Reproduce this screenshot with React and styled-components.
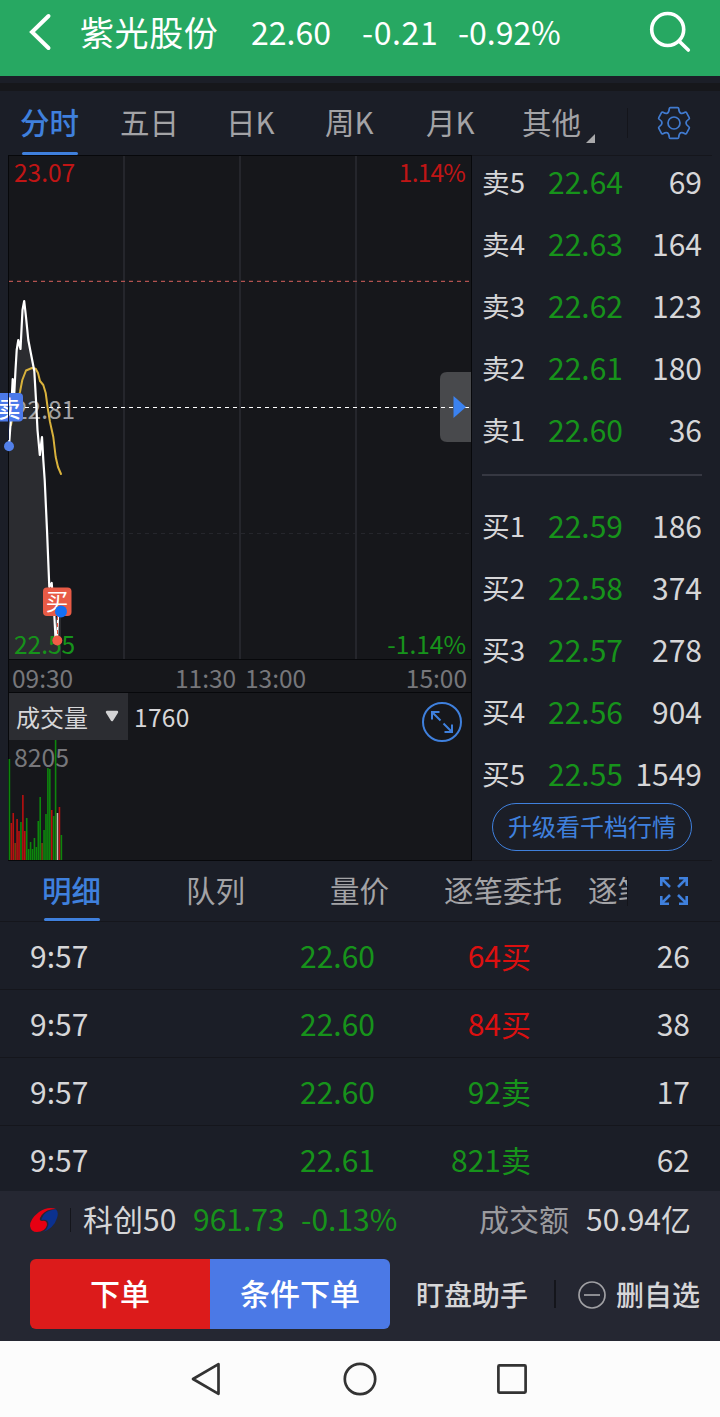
import React, { useState } from "react";
import styled, { createGlobalStyle } from "styled-components";

const GlobalStyle = createGlobalStyle`
  * {
    box-sizing: border-box;
  }

  body {
    margin: 0;
    background-color: #1b1e27;
    font-family: "Noto Sans CJK SC", sans-serif;
  }
`;

const Page = styled.div`
  width: 720px;
  height: 1417px;
  display: flex;
  flex-direction: column;
  overflow: hidden;
  background-color: #1b1e27;
  color: #d6d6d8;
  white-space: nowrap;
`;

const Header = styled.header`
  height: 76px;
  padding: 0 28px 12px;
  display: grid;
  grid-template-columns: 52px 171px 111px 96px 190px 44px;
  align-items: center;
  background-color: #27a862;
  color: #ffffff;
`;

const StockName = styled.div`
  padding-bottom: 2px;
  font-size: 34px;
  letter-spacing: 0.6px;
`;

const HeaderNumber = styled.div`
  padding-bottom: 2px;
  font-size: 32px;
  letter-spacing: ${(props) => props.$spacing || 0}px;
`;

const Strip = styled.div`
  height: 15px;
  border-top: 7px solid #1b1e27;
  background-color: #16171b;
`;

const PeriodTabs = styled.nav`
  height: 64px;
  padding-left: 20px;
  display: grid;
  grid-template-columns: 100px 106px 99px 101px 96px 105px 1px 92px;
  align-items: center;
`;

const Tab = styled.div`
  height: 64px;
  display: flex;
  align-items: center;
  font-size: 29.5px;
  font-weight: ${(props) => (props.$selected ? 500 : 400)};
  color: ${(props) => (props.$selected ? "#3f80dd" : "#a3a3a6")};
  cursor: pointer;

  span {
    height: 64px;
    line-height: 61px;
    display: flex;
    flex-direction: column;
  }

  span::after {
    content: "";
    width: 56px;
    height: 3px;
    margin-left: 2px;
    border-radius: 2px;
    background-color: ${(props) =>
      props.$selected ? "#3f80dd" : "transparent"};
  }
`;

const Corner = styled.i`
  margin: 30px 0 0 5px;
  border-left: 9px solid transparent;
  border-bottom: 9px solid #a9a9ab;
`;

const Separator = styled.div`
  width: ${(props) => props.$width || 1}px;
  height: ${(props) => props.$height}px;
  background-color: #14151b;
`;

const IconCell = styled.div`
  display: flex;
  justify-content: center;
`;

const Market = styled.main`
  height: 706px;
  padding-left: 8px;
  display: flex;
`;

const Charts = styled.div`
  width: 464px;
  display: flex;
  flex-direction: column;

  svg {
    display: block;
  }
`;

const TimeAxis = styled.div`
  height: 33px;
  padding: 0 4px 3px 3px;
  display: grid;
  grid-template-columns: 163px 70px 1fr auto;
  align-items: center;
  border: 1px solid #07080b;
  border-width: 1px 1px 0;
  background-color: #16171b;
  color: #77777b;
  font-size: 24.5px;
`;

const VolumeBar = styled.div`
  height: 48px;
  display: flex;
  align-items: stretch;
  border: 1px solid #07080b;
  border-bottom: none;
  background-color: #16171b;
`;

const VolumeSelect = styled.div`
  width: 119px;
  padding: 0 9px 1px 7px;
  display: flex;
  align-items: center;
  justify-content: space-between;
  background-color: #2c2d32;
  font-size: 24px;
`;

const VolumeValue = styled.div`
  flex: 1;
  padding-left: 6px;
  line-height: 47px;
  font-size: 24.5px;
  letter-spacing: 0.3px;
`;

/* hangs a little over the volume chart below the bar */
const ExpandButton = styled.div`
  position: relative;
  z-index: 1;
  height: 40px;
  margin: 9px 9px 0 0;
`;

const OrderBook = styled.aside`
  flex: 1;
  margin-right: 8px;
  padding: 0 10px 0 11px;
  border-top: 1px solid #15161c;
  border-bottom: 1px solid #15161c;
`;

const Level = styled.div`
  height: 62px;
  padding-bottom: 4px;
  display: grid;
  grid-template-columns: 65px 75px 1fr;
  align-items: center;
  font-size: 30px;

  &:first-child {
    height: 58px;
    padding-bottom: 8px;
  }
`;

const Side = styled.span`
  margin-left: -1px;
  padding-bottom: 1px;
  font-size: 27.7px;
`;

const Quote = styled.span`
  color: #17931b;
`;

const Amount = styled.span`
  text-align: right;
`;

const BookDivider = styled.hr`
  height: 2px;
  margin: 12px 0 20px -1px;
  border: none;
  background-color: #363842;
`;

const UpgradeButton = styled.div`
  width: 200px;
  height: 48px;
  margin: -3px 0 0 9px;
  border: 1px solid #3f80dd;
  border-radius: 24px;
  color: #3f80dd;
  font-size: 24px;
  line-height: 44px;
  text-align: center;
`;

const DetailTabs = styled.nav`
  height: 61px;
  padding-left: 42px;
  display: grid;
  grid-template-columns: 144px 144px 114px 144px 39px 1px 92px;
  align-items: center;
  border-bottom: 1px solid #15161c;

  ${Tab} {
    height: 60px;
    overflow: hidden;
  }

  ${Tab} span {
    height: 60px;
    line-height: 57px;
  }
`;

const Trades = styled.div`
  height: 269px;
  overflow: hidden;
`;

const Trade = styled.div`
  height: 68px;
  padding: 0 30px 2px;
  display: grid;
  grid-template-columns: 270px 75px 156px 1fr;
  align-items: center;
  border-bottom: 1px solid #15161c;
  font-size: 30px;
`;

const Deal = styled.span`
  text-align: right;
  color: ${(props) => (props.$buy ? "#dc1010" : "#17931b")};
`;

const Footer = styled.footer`
  height: 150px;
  padding: 0 30px;
  background-color: #252732;
`;

const IndexRow = styled.div`
  height: 57px;
  display: grid;
  grid-template-columns: 40px 13px 110px 108px 178px 107px auto;
  align-items: center;
  font-size: 30px;

  span {
    padding-bottom: 4px;
  }
`;

const Green = styled.span`
  color: #17931b;
`;

const Muted = styled.span`
  color: #9b9b9f;
`;

const ActionRow = styled.div`
  height: 93px;
  margin-right: -30px;
  padding-bottom: 1px;
  display: flex;
  align-items: center;
  font-size: 28px;
  font-weight: 500;
`;

const OrderButton = styled.div`
  width: 180px;
  height: 70px;
  margin-top: -1px;
  border-radius: ${(props) => props.$radius};
  background-color: ${(props) => props.$color};
  color: #ffffff;
  font-size: 30px;
  font-weight: 500;
  line-height: 67px;
  text-align: center;
`;

const Assistant = styled.div`
  width: 164px;
  padding: 0 0 1px 26px;
`;

const Remove = styled.div`
  padding: 0 0 1px 22px;
  display: flex;
  align-items: center;
  gap: 10px;

  svg {
    margin-top: 3px;
  }
`;

const SystemBar = styled.div`
  height: 76px;
  background-color: #fcfcfc;
  display: grid;
  grid-template-columns: 52px 52px 52px;
  gap: 100px;
  justify-content: center;
  align-items: center;
  justify-items: center;
`;

const PRICE_LINE =
  "9,446 11,417 12,393 12.7,379 14.3,393 15.5,370 16.7,350 18.3,340 20.5,349 22.5,310 24.2,301 26,317 28.3,340 31,354 34.3,371 36,400 37.5,430 39.8,455 42,437 43.3,460 44.7,480 47,530 49.3,587 51.7,583 53,600 54.3,615 55.6,640 57,640 58,617 61,611";

const AVERAGE_LINE =
  "11,425 14,410 20,392 22.3,380 26,370.5 32,368 35.7,368.7 38,373 40,381 43.3,385 45.7,393 47.7,408 50,422 53.3,437 55.7,457 58,467 61,474";

// bar height and kind: r = up, g = down, w = flat, m = mixed
const VOLUMES = [
  [101, "g"], [37, "r"], [47, "r"], [17, "m"], [41, "r"], [29, "r"],
  [38, "g"], [65, "r"], [29, "r"], [42, "g"], [11, "g"], [18, "g"],
  [11, "g"], [22, "g"], [13, "g"], [39, "g"], [63, "g"], [17, "m"],
  [30, "g"], [46, "g"], [92, "g"], [91, "g"], [50, "r"], [44, "g"],
  [120, "g"], [47, "w"], [53, "r"], [25, "g"],
];

const VOLUME_COLORS = { r: "#b91010", g: "#0d860d", w: "#c2bcae", m: "#73410f" };

const SELLS = [
  ["卖5", "22.64", 69],
  ["卖4", "22.63", 164],
  ["卖3", "22.62", 123],
  ["卖2", "22.61", 180],
  ["卖1", "22.60", 36],
];

const BUYS = [
  ["买1", "22.59", 186],
  ["买2", "22.58", 374],
  ["买3", "22.57", 278],
  ["买4", "22.56", 904],
  ["买5", "22.55", 1549],
];

const TRADES = [
  ["9:57", "22.60", "64买", 26],
  ["9:57", "22.60", "84买", 38],
  ["9:57", "22.60", "92卖", 17],
  ["9:57", "22.61", "821卖", 62],
];

function PriceChart() {
  return (
    <svg
      width="472"
      height="504"
      viewBox="0 155 472 504"
      style={{ marginLeft: -8 }}
    >
      <rect x="8.5" y="155.5" width="463" height="505" fill="#16171b" stroke="#07080b" />
      <g stroke="#25262c" strokeWidth="2">
        <path d="M124 156V659M240 156V659M356 156V659" />
      </g>
      <path d="M9 533.5H471" stroke="#25262c" strokeDasharray="4 4" />
      <polygon points={`9,659 ${PRICE_LINE} 61,659`} fill="#2b2c30" />
      <path d="M9 281.3H471" stroke="#b2524f" strokeWidth="1.3" strokeDasharray="4 4" />
      <g fontSize="24.5">
        <text x="14" y="181.6" fill="#c01515">23.07</text>
        <text x="465" y="181.6" fill="#c01515" textAnchor="end" letterSpacing="-0.8">1.14%</text>
        <text x="14" y="418.5" fill="#a0a0a3">22.81</text>
        <text x="14" y="653.6" fill="#17931b">22.55</text>
        <text x="466" y="653.6" fill="#17931b" textAnchor="end">-1.14%</text>
      </g>
      <path d="M447 372H471V442H447Q440 442 440 435V379Q440 372 447 372Z" fill="#48494c" />
      <path d="M9 407.5H471" stroke="#ffffff" strokeDasharray="4 4" />
      <path d="M453.5 396L466 407L453.5 418Z" fill="#3b82f0" />
      <polyline points={AVERAGE_LINE} fill="none" stroke="#d9b23c" strokeWidth="2" strokeLinejoin="round" strokeLinecap="round" />
      <polyline points={PRICE_LINE} fill="none" stroke="#ffffff" strokeWidth="2.2" strokeLinejoin="round" />
      <rect x="-6" y="393" width="29" height="28.5" rx="4" fill="#4b79ea" />
      <text x="-2" y="416.5" fontSize="22.5" fontWeight="500" fill="#ffffff">卖</text>
      <path d="M8.5 393V440" stroke="#101a3a" />
      <circle cx="9" cy="446.3" r="5" fill="#5280ea" />
      <path d="M57.5 616V636" stroke="#e8503c" strokeDasharray="4 3" />
      <rect x="43" y="587.5" width="28.5" height="28.5" rx="4" fill="#e85b46" />
      <text x="45.7" y="609.5" fontSize="22.5" fill="#ffffff">买</text>
      <circle cx="61" cy="611.5" r="6" fill="#1470f4" />
      <circle cx="57.3" cy="640.5" r="5" fill="#f05c46" />
    </svg>
  );
}

function VolumeChart() {
  return (
    <svg
      width="464"
      height="121"
      viewBox="8 740 464 121"
    >
      <rect x="8" y="740" width="464" height="121" fill="#16171b" />
      <path d="M8.5 740V860.5H471.5V740" fill="none" stroke="#07080b" />
      <text x="14" y="766.6" fontSize="24.8" fill="#77777b">8205</text>
      {VOLUMES.map(([size, kind], i) => (
        <rect
          key={i}
          x={8.6 + i * 1.925}
          y={860 - size}
          width="1.6"
          height={size}
          fill={VOLUME_COLORS[kind]}
        />
      ))}
    </svg>
  );
}

function GearIcon() {
  return (
    <svg width="34" height="34" viewBox="-17 -17 34 34" fill="none" stroke="#417bd0" strokeWidth="1.7" strokeLinejoin="round">
      <circle r="6" />
      <path d="M-3.6 -15.4H3.6Q4.6 -15.4 4.7 -14.4Q4.9 -10.8 6.7 -9.8Q8.2 -9 11 -10.7Q12 -11.2 12.5 -10.3L15.2 -5.4Q15.7 -4.5 14.9 -3.9Q12 -2 12 0Q12 2 14.9 3.9Q15.7 4.5 15.2 5.4L12.5 10.3Q12 11.2 11 10.7Q8.2 9 6.7 9.8Q4.9 10.8 4.7 14.4Q4.6 15.4 3.6 15.4H-3.6Q-4.6 15.4 -4.7 14.4Q-4.9 10.8 -6.7 9.8Q-8.2 9 -11 10.7Q-12 11.2 -12.5 10.3L-15.2 5.4Q-15.7 4.5 -14.9 3.9Q-12 2 -12 0Q-12 -2 -14.9 -3.9Q-15.7 -4.5 -15.2 -5.4L-12.5 -10.3Q-12 -11.2 -11 -10.7Q-8.2 -9 -6.7 -9.8Q-4.9 -10.8 -4.7 -14.4Q-4.6 -15.4 -3.6 -15.4Z" />
    </svg>
  );
}

function Levels({ rows }) {
  return rows.map(([side, price, amount]) => (
    <Level key={side}>
      <Side>{side}</Side>
      <Quote>{price}</Quote>
      <Amount>{amount}</Amount>
    </Level>
  ));
}

function App() {
  const [period, setPeriod] = useState("分时");
  const [detail, setDetail] = useState("明细");
  return (
    <>
      <GlobalStyle />
      <Page>
        <Header>
          <svg width="24" height="40" viewBox="0 0 24 40" fill="none" stroke="#ffffff" strokeWidth="4">
            <path d="M20.5 4L4 20L20.5 36" strokeLinecap="round" />
          </svg>
          <StockName>紫光股份</StockName>
          <HeaderNumber>22.60</HeaderNumber>
          <HeaderNumber $spacing={0.6}>-0.21</HeaderNumber>
          <HeaderNumber>-0.92%</HeaderNumber>
          <svg width="44" height="44" viewBox="0 0 44 44" fill="none" stroke="#ffffff" strokeWidth="3.6" strokeLinecap="round">
            <circle cx="19.7" cy="19.5" r="16" />
            <path d="M31 31L40.3 40" />
          </svg>
        </Header>
        <Strip />
        <PeriodTabs>
          {["分时", "五日", "日K", "周K", "月K", "其他"].map((name) => (
            <Tab
              key={name}
              $selected={period === name}
              onClick={() => setPeriod(name)}
            >
              <span>{name}</span>
              {name === "其他" && <Corner />}
            </Tab>
          ))}
          <Separator $height={30} />
          <IconCell>
            <GearIcon />
          </IconCell>
        </PeriodTabs>
        <Market>
          <Charts>
            <PriceChart />
            <TimeAxis>
              <span>09:30</span>
              <span>11:30</span>
              <span>13:00</span>
              <span>15:00</span>
            </TimeAxis>
            <VolumeBar>
              <VolumeSelect>
                成交量
                <svg width="14" height="12" viewBox="0 0 14 12">
                  <path d="M2 2H12L7 10Z" fill="#d2d2d4" stroke="#d2d2d4" strokeWidth="2.4" strokeLinejoin="round" />
                </svg>
              </VolumeSelect>
              <VolumeValue>1760</VolumeValue>
              <ExpandButton>
                <svg width="40" height="40" viewBox="0 0 40 40" fill="none" stroke="#3f80dd" strokeWidth="2">
                  <circle cx="20" cy="20" r="19" />
                  <path d="M10 17.5V10H17.5M10 10L18.5 18.5M30 22.5V30H22.5M30 30L21.5 21.5" />
                </svg>
              </ExpandButton>
            </VolumeBar>
            <VolumeChart />
          </Charts>
          <OrderBook>
            <Levels rows={SELLS} />
            <BookDivider />
            <Levels rows={BUYS} />
            <UpgradeButton>升级看千档行情</UpgradeButton>
          </OrderBook>
        </Market>
        <DetailTabs>
          {["明细", "队列", "量价", "逐笔委托", "逐笔"].map((name) => (
            <Tab
              key={name}
              $selected={detail === name}
              onClick={() => setDetail(name)}
            >
              <span>{name}</span>
            </Tab>
          ))}
          <Separator $height={30} />
          <IconCell>
            <svg width="28" height="28" viewBox="0 0 28 28" fill="none" stroke="#3f80dd" strokeWidth="2.6">
              <path d="M1.3 9V1.3H9M1.3 1.3L10 10M19 1.3H26.7V9M26.7 1.3L18 10M1.3 19V26.7H9M1.3 26.7L10 18M19 26.7H26.7V19M26.7 26.7L18 18" />
            </svg>
          </IconCell>
        </DetailTabs>
        <Trades>
          {TRADES.map(([time, price, deal, count], i) => (
            <Trade key={i}>
              <span>{time}</span>
              <Quote>{price}</Quote>
              <Deal $buy={deal.endsWith("买")}>{deal}</Deal>
              <Amount>{count}</Amount>
            </Trade>
          ))}
        </Trades>
        <Footer>
          <IndexRow>
            <svg width="28" height="26" viewBox="0 0 28 26">
              <path d="M26 2.5Q29 5 27 11Q24 21 13 25Q18 22 18.5 17Q18 12 12 13Q11 13 12 11Q15 4 22 3Q25 2 26 2.5Z" fill="#0b318f" />
              <path d="M26 2Q18 -1 9 5Q0 12 0 19Q1 25 7 25Q15 25 17 18Q17 13 12 14Q9 14 10 11Q13 4 21 2.5Q24 1.8 26 2Z" fill="#e60012" />
            </svg>
            <Separator $height={24} />
            <span>科创50</span>
            <Green>961.73</Green>
            <Green>-0.13%</Green>
            <Muted>成交额</Muted>
            <span>50.94亿</span>
          </IndexRow>
          <ActionRow>
            <OrderButton $color="#dc1b1b" $radius="6px 0 0 6px">
              下单
            </OrderButton>
            <OrderButton $color="#4b79e6" $radius="0 6px 6px 0">
              条件下单
            </OrderButton>
            <Assistant>盯盘助手</Assistant>
            <Separator $width={2} $height={28} />
            <Remove>
              <svg width="28" height="28" viewBox="0 0 28 28" fill="none" stroke="#a0a0a4" strokeWidth="1.7">
                <circle cx="14" cy="14" r="13" />
                <path d="M6 14H22" />
              </svg>
              删自选
            </Remove>
          </ActionRow>
        </Footer>
        <SystemBar>
          <svg width="34" height="34" viewBox="0 0 34 34" fill="none" stroke="#333333" strokeWidth="2.7" strokeLinejoin="round">
            <path d="M2 17L27.5 2.2V31.8Z" />
          </svg>
          <svg width="34" height="34" viewBox="0 0 34 34" fill="none" stroke="#333333" strokeWidth="2.7">
            <circle cx="17" cy="17" r="15.2" />
          </svg>
          <svg width="30" height="30" viewBox="0 0 30 30" fill="none" stroke="#333333" strokeWidth="2.7">
            <rect x="1.4" y="1.4" width="27.2" height="27.2" rx="1" />
          </svg>
        </SystemBar>
      </Page>
    </>
  );
}

export default App;
